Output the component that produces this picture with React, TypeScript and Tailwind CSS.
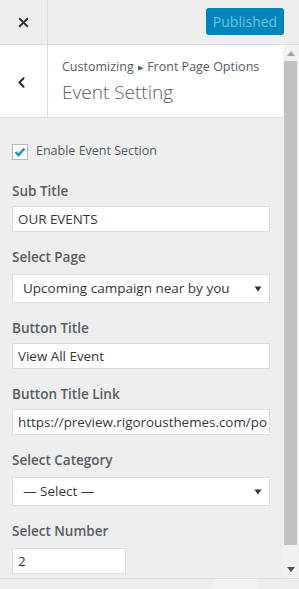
import { ChevronLeft, X } from 'lucide-react'

const font = { fontFamily: '"Open Sans", "Noto Sans", sans-serif' }

function Field({ label, select, children }: { label: string; select?: boolean; children: React.ReactNode }) {
  return (
    <div className="mt-[15px]">
      <div className="h-[20px] text-[13.5px] leading-[20px] font-semibold text-[#555d66]">{label}</div>
      <div className={select ? 'mt-[7px]' : 'mt-[5px]'}>{children}</div>
    </div>
  )
}

function TextInput({ value, className = 'w-[258px]' }: { value: string; className?: string }) {
  return (
    <div
      className={`${className} h-[26px] overflow-hidden whitespace-nowrap border border-[#dddddd] bg-white pl-[5px] text-[13.4px] leading-[24px] text-[#32373c]`}
    >
      {value}
    </div>
  )
}

function SelectBox({ value }: { value: string }) {
  return (
    <div className="flex h-[29px] w-[258px] items-center justify-between border border-[#dddddd] bg-white pl-[10px] pr-[6px] text-[13.5px] text-[#32373c]">
      <span>{value}</span>
      <svg width="8" height="6" viewBox="0 0 8 6" className="mr-[1px]">
        <path d="M0.5 0.5 L7.5 0.5 L4 5.5 Z" fill="#333" />
      </svg>
    </div>
  )
}

export default function App() {
  return (
    <div className="flex h-[589px] w-[299px] flex-col overflow-hidden bg-[#eeeeee]" style={font}>
      {/* top bar */}
      <div className="flex h-[45px] shrink-0 items-stretch border-b border-[#dddddd] bg-[#eeeeee]">
        <div className="flex w-[48px] items-center justify-center border-r border-[#dddddd]">
          <X size={15} strokeWidth={3.2} className="text-[#333]" />
        </div>
        <div className="flex flex-1 items-start justify-end pr-[15px] pt-[8px]">
          <div className="flex h-[27px] w-[78px] items-center justify-center rounded-[3px] bg-[#0085ba] text-[14px] text-[#6fc3e3]">
            Published
          </div>
        </div>
      </div>

      {/* panel + scrollbar */}
      <div className="flex h-[533px] shrink-0">
        <div className="flex w-[283px] flex-col">
          <div className="flex h-[73px] shrink-0 border-b border-[#dddddd] bg-white">
            <div className="flex w-[48px] items-center justify-center border-r border-[#dddddd]">
              <ChevronLeft size={17} strokeWidth={2.6} className="-ml-[5px] mt-[2px] text-[#222]" />
            </div>
            <div className="pl-[14px] pt-[13px]">
              <div className="text-[12.5px] leading-[18px] text-[#555d66]">
                Customizing <span className="mx-[1px] text-[7px] align-middle">▶</span> Front Page Options
              </div>
              <div className="mt-[2px] text-[19px] leading-[26px] font-light text-[#555d66]">Event Setting</div>
            </div>
          </div>

          <div className="px-[12px] pt-[25px]">
            <div className="flex h-[17px] items-center gap-[8px]">
              <div className="flex h-[16px] w-[16px] items-center justify-center border border-[#b4b9be] bg-white">
                <svg width="12" height="10" viewBox="0 0 12 10">
                  <path d="M1.5 5 L4.5 8 L10.5 1.5" stroke="#1e8cbe" strokeWidth="2.4" fill="none" />
                </svg>
              </div>
              <span className="text-[12.5px] text-[#555d66]">Enable Event Section</span>
            </div>

            <div className="pt-[6px]">
              <Field label="Sub Title">
                <TextInput value="OUR EVENTS" />
              </Field>
              <Field label="Select Page" select>
                <SelectBox value="Upcoming campaign near by you" />
              </Field>
              <Field label="Button Title">
                <TextInput value="View All Event" />
              </Field>
              <Field label="Button Title Link">
                <TextInput value="https://preview.rigorousthemes.com/po" />
              </Field>
              <Field label="Select Category" select>
                <SelectBox value="— Select —" />
              </Field>
              <Field label="Select Number" select>
                <TextInput value="2" className="w-[114px]" />
              </Field>
            </div>
          </div>
        </div>

        {/* scrollbar */}
        <div className="flex w-[16px] flex-col items-center bg-[#f1f1f1]">
          <div className="flex h-[16px] w-full items-center justify-center">
            <svg width="8" height="5" viewBox="0 0 8 5">
              <path d="M0 5 L8 5 L4 0 Z" fill="#a3a3a3" />
            </svg>
          </div>
          <div className="ml-[1px] h-[484px] w-[13px] self-start bg-[#c1c1c1]" />
          <div className="flex flex-1 items-end justify-center pb-[6px]">
            <svg width="8" height="5" viewBox="0 0 8 5">
              <path d="M0 0 L8 0 L4 5 Z" fill="#505050" />
            </svg>
          </div>
        </div>
      </div>

      {/* bottom strip */}
      <div className="flex flex-1 border-t border-[#dddddd]">
        <div className="ml-[214px] w-[43px] bg-[#f2f2f2]" />
      </div>
    </div>
  )
}
